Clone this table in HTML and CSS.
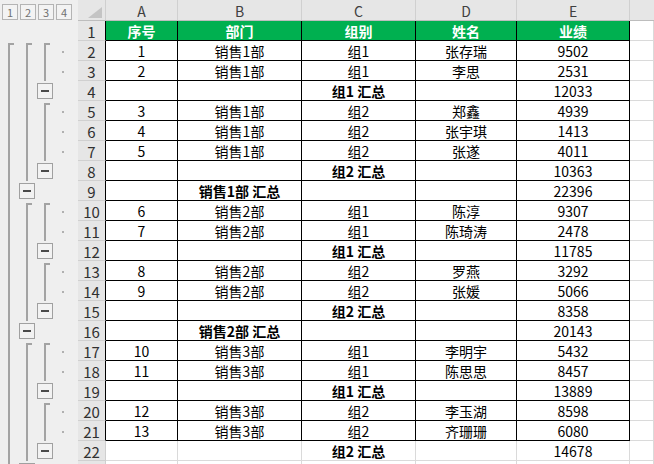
FILE: index.html
```html
<!DOCTYPE html>
<html lang="zh-CN">
<head>
<meta charset="utf-8">
<title>分类汇总</title>
<link rel="stylesheet" href="styles.css">
</head>
<body>
<div class="app">
  <div class="outline">
    <div class="levels">
      <span class="lvbtn">1</span><span class="lvbtn">2</span><span class="lvbtn">3</span><span class="lvbtn">4</span>
    </div>
    <div class="orow"><span class="slot"></span><span class="slot"></span><span class="slot"></span><span class="slot"></span></div>
    <!-- 2 -->
    <div class="orow"><span class="slot start"></span><span class="slot start"></span><span class="slot start"></span><span class="slot dot"></span></div>
    <!-- 3 -->
    <div class="orow"><span class="slot line"></span><span class="slot line"></span><span class="slot line"></span><span class="slot dot"></span></div>
    <!-- 4 -->
    <div class="orow"><span class="slot line"></span><span class="slot line"></span><span class="slot"><i class="box"></i></span><span class="slot"></span></div>
    <!-- 5 -->
    <div class="orow"><span class="slot line"></span><span class="slot line"></span><span class="slot start"></span><span class="slot dot"></span></div>
    <!-- 6 -->
    <div class="orow"><span class="slot line"></span><span class="slot line"></span><span class="slot line"></span><span class="slot dot"></span></div>
    <!-- 7 -->
    <div class="orow"><span class="slot line"></span><span class="slot line"></span><span class="slot line"></span><span class="slot dot"></span></div>
    <!-- 8 -->
    <div class="orow"><span class="slot line"></span><span class="slot line"></span><span class="slot"><i class="box"></i></span><span class="slot"></span></div>
    <!-- 9 -->
    <div class="orow"><span class="slot line"></span><span class="slot"><i class="box"></i></span><span class="slot"></span><span class="slot"></span></div>
    <!-- 10 -->
    <div class="orow"><span class="slot line"></span><span class="slot start"></span><span class="slot start"></span><span class="slot dot"></span></div>
    <!-- 11 -->
    <div class="orow"><span class="slot line"></span><span class="slot line"></span><span class="slot line"></span><span class="slot dot"></span></div>
    <!-- 12 -->
    <div class="orow"><span class="slot line"></span><span class="slot line"></span><span class="slot"><i class="box"></i></span><span class="slot"></span></div>
    <!-- 13 -->
    <div class="orow"><span class="slot line"></span><span class="slot line"></span><span class="slot start"></span><span class="slot dot"></span></div>
    <!-- 14 -->
    <div class="orow"><span class="slot line"></span><span class="slot line"></span><span class="slot line"></span><span class="slot dot"></span></div>
    <!-- 15 -->
    <div class="orow"><span class="slot line"></span><span class="slot line"></span><span class="slot"><i class="box"></i></span><span class="slot"></span></div>
    <!-- 16 -->
    <div class="orow"><span class="slot line"></span><span class="slot"><i class="box"></i></span><span class="slot"></span><span class="slot"></span></div>
    <!-- 17 -->
    <div class="orow"><span class="slot line"></span><span class="slot start"></span><span class="slot start"></span><span class="slot dot"></span></div>
    <!-- 18 -->
    <div class="orow"><span class="slot line"></span><span class="slot line"></span><span class="slot line"></span><span class="slot dot"></span></div>
    <!-- 19 -->
    <div class="orow"><span class="slot line"></span><span class="slot line"></span><span class="slot"><i class="box"></i></span><span class="slot"></span></div>
    <!-- 20 -->
    <div class="orow"><span class="slot line"></span><span class="slot line"></span><span class="slot start"></span><span class="slot dot"></span></div>
    <!-- 21 -->
    <div class="orow"><span class="slot line"></span><span class="slot line"></span><span class="slot line"></span><span class="slot dot"></span></div>
    <!-- 22 -->
    <div class="orow"><span class="slot line"></span><span class="slot line"></span><span class="slot"><i class="box"></i></span><span class="slot"></span></div>
    <!-- 23 -->
    <div class="orow"><span class="slot line"></span><span class="slot"><i class="box"></i></span><span class="slot"></span><span class="slot"></span></div>
  </div>

  <div class="sheet">
    <div class="corner"><svg width="14" height="11" viewBox="0 0 14 11"><polygon points="14,0 14,11 0,11" fill="#c4c4c4"/></svg></div>
    <div class="ch">A</div><div class="ch">B</div><div class="ch">C</div><div class="ch">D</div><div class="ch">E</div><div class="ch last"></div>

    <div class="rh t">1</div><div class="c t hd">序号</div><div class="c t hd">部门</div><div class="c t hd">组别</div><div class="c t hd">姓名</div><div class="c t hd">业绩</div><div class="c"></div>
    <div class="rh t">2</div><div class="c t">1</div><div class="c t">销售1部</div><div class="c t">组1</div><div class="c t">张存瑞</div><div class="c t">9502</div><div class="c"></div>
    <div class="rh t">3</div><div class="c t">2</div><div class="c t">销售1部</div><div class="c t">组1</div><div class="c t">李思</div><div class="c t">2531</div><div class="c"></div>
    <div class="rh t">4</div><div class="c t"></div><div class="c t"></div><div class="c t b">组1 汇总</div><div class="c t"></div><div class="c t">12033</div><div class="c"></div>
    <div class="rh t">5</div><div class="c t">3</div><div class="c t">销售1部</div><div class="c t">组2</div><div class="c t">郑鑫</div><div class="c t">4939</div><div class="c"></div>
    <div class="rh t">6</div><div class="c t">4</div><div class="c t">销售1部</div><div class="c t">组2</div><div class="c t">张宇琪</div><div class="c t">1413</div><div class="c"></div>
    <div class="rh t">7</div><div class="c t">5</div><div class="c t">销售1部</div><div class="c t">组2</div><div class="c t">张遂</div><div class="c t">4011</div><div class="c"></div>
    <div class="rh t">8</div><div class="c t"></div><div class="c t"></div><div class="c t b">组2 汇总</div><div class="c t"></div><div class="c t">10363</div><div class="c"></div>
    <div class="rh t">9</div><div class="c t"></div><div class="c t b">销售1部 汇总</div><div class="c t"></div><div class="c t"></div><div class="c t">22396</div><div class="c"></div>
    <div class="rh t">10</div><div class="c t">6</div><div class="c t">销售2部</div><div class="c t">组1</div><div class="c t">陈淳</div><div class="c t">9307</div><div class="c"></div>
    <div class="rh t">11</div><div class="c t">7</div><div class="c t">销售2部</div><div class="c t">组1</div><div class="c t">陈琦涛</div><div class="c t">2478</div><div class="c"></div>
    <div class="rh t">12</div><div class="c t"></div><div class="c t"></div><div class="c t b">组1 汇总</div><div class="c t"></div><div class="c t">11785</div><div class="c"></div>
    <div class="rh t">13</div><div class="c t">8</div><div class="c t">销售2部</div><div class="c t">组2</div><div class="c t">罗燕</div><div class="c t">3292</div><div class="c"></div>
    <div class="rh t">14</div><div class="c t">9</div><div class="c t">销售2部</div><div class="c t">组2</div><div class="c t">张媛</div><div class="c t">5066</div><div class="c"></div>
    <div class="rh t">15</div><div class="c t"></div><div class="c t"></div><div class="c t b">组2 汇总</div><div class="c t"></div><div class="c t">8358</div><div class="c"></div>
    <div class="rh t">16</div><div class="c t"></div><div class="c t b">销售2部 汇总</div><div class="c t"></div><div class="c t"></div><div class="c t">20143</div><div class="c"></div>
    <div class="rh t">17</div><div class="c t">10</div><div class="c t">销售3部</div><div class="c t">组1</div><div class="c t">李明宇</div><div class="c t">5432</div><div class="c"></div>
    <div class="rh t">18</div><div class="c t">11</div><div class="c t">销售3部</div><div class="c t">组1</div><div class="c t">陈思思</div><div class="c t">8457</div><div class="c"></div>
    <div class="rh t">19</div><div class="c t"></div><div class="c t"></div><div class="c t b">组1 汇总</div><div class="c t"></div><div class="c t">13889</div><div class="c"></div>
    <div class="rh t">20</div><div class="c t">12</div><div class="c t">销售3部</div><div class="c t">组2</div><div class="c t">李玉湖</div><div class="c t">8598</div><div class="c"></div>
    <div class="rh t">21</div><div class="c t">13</div><div class="c t">销售3部</div><div class="c t">组2</div><div class="c t">齐珊珊</div><div class="c t">6080</div><div class="c"></div>
    <div class="rh">22</div><div class="c"></div><div class="c"></div><div class="c b">组2 汇总</div><div class="c"></div><div class="c">14678</div><div class="c"></div>
    <div class="rh"></div><div class="c"></div><div class="c"></div><div class="c"></div><div class="c"></div><div class="c"></div><div class="c"></div>
  </div>
</div>
</body>
</html>
```

FILE: styles.css
```css
* { box-sizing: border-box; }
html, body { margin: 0; padding: 0; }
body {
  width: 654px;
  height: 464px;
  overflow: hidden;
  background: #ffffff;
  font-family: "Noto Sans CJK SC", "Noto Sans", sans-serif;
  color: #000;
}
.app {
  display: flex;
  align-items: flex-start;
}
.outline {
  width: 78px;
  flex: none;
  background: #efefef;
  height: 480px;
}
.levels {
  height: 21px;
  display: flex;
  gap: 2px;
  padding: 4px 0 0 2px;
}
.lvbtn {
  width: 16px;
  height: 16px;
  border: 1px solid #b4b4b4;
  background: #f3f3f3;
  color: #707070;
  font-size: 11px;
  line-height: 14px;
  text-align: center;
}
.orow {
  height: 20px;
  display: flex;
}
.slot {
  width: 18px;
  height: 20px;
  flex: none;
  display: flex;
  align-items: center;
  justify-content: center;
}
.slot.line {
  background: linear-gradient(#a3a3a3, #a3a3a3) 8px 0 / 2px 100% no-repeat;
}
.slot.start {
  background:
    linear-gradient(#a3a3a3, #a3a3a3) 8px 2px / 2px 18px no-repeat,
    linear-gradient(#a3a3a3, #a3a3a3) 8px 2px / 6px 2px no-repeat;
}
.slot.dot {
  background: linear-gradient(#b0b0b0, #b0b0b0) 8px 10px / 2px 2px no-repeat;
}
.box {
  display: flex;
  width: 16px;
  height: 16px;
  border: 1px solid #a0a0a0;
  background: #f2f2f2;
  align-items: center;
  justify-content: center;
}
.box::before {
  content: "";
  width: 8px;
  height: 2px;
  background: #4a4a4a;
}
.sheet {
  flex: 1;
  display: grid;
  grid-template-columns: 28px 72px 124px 114px 101px 113px 1fr;
  grid-template-rows: 21px;
  grid-auto-rows: 20px;
}
.corner {
  background: #e6e6e6;
  border-right: 1px solid #cfcfcf;
  border-bottom: 1px solid #bdbdbd;
  display: flex;
  align-items: flex-end;
  justify-content: flex-end;
  padding: 0 3px 2px 0;
}
.corner svg { display: block; }
.ch {
  background: #e6e6e6;
  border-right: 1px solid #d0d0d0;
  border-bottom: 1px solid #bdbdbd;
  color: #404040;
  font-size: 14px;
  line-height: 22px;
  text-align: center;
}
.ch.last { border-right: none; }
.rh {
  background: #e6e6e6;
  border-right: 1px solid #cfcfcf;
  border-bottom: 1px solid #d0d0d0;
  color: #303030;
  font-size: 15px;
  line-height: 21px;
  text-align: center;
}
.rh.t { border-right-color: #000; }
.c {
  border-right: 1px solid #dadada;
  border-bottom: 1px solid #dadada;
  font-size: 14px;
  line-height: 20px;
  text-align: center;
  white-space: nowrap;
  overflow: hidden;
}
.c.t {
  border-right-color: #000;
  border-bottom-color: #000;
}
.c.hd {
  background: #00b050;
  color: #ffffff;
  font-weight: bold;
}
.c.b { font-weight: bold; }
```
